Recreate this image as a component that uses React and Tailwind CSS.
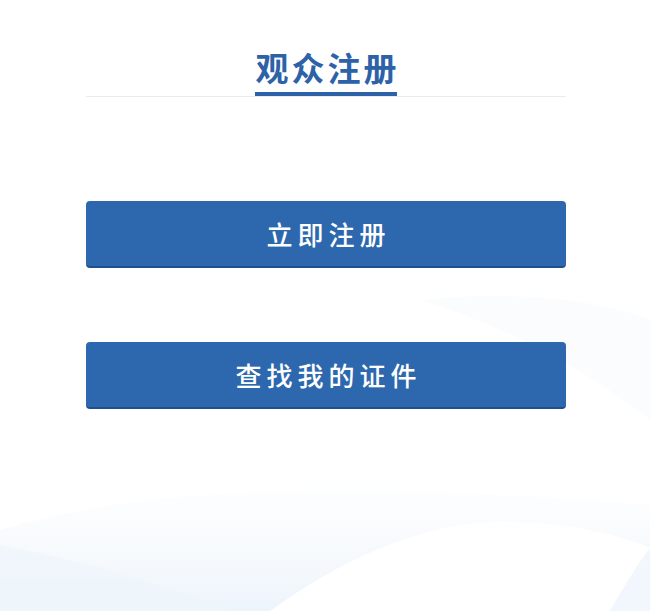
export default function App() {
  return (
    <div
      className="relative w-[650px] h-[611px] overflow-hidden bg-white"
      style={{ fontFamily: '"Noto Sans CJK SC", "Noto Sans", sans-serif' }}
    >
      <svg
        className="absolute inset-0 pointer-events-none"
        width="650"
        height="611"
        viewBox="0 0 650 611"
      >
        <defs>
          <linearGradient id="g2" x1="0" y1="0" x2="0" y2="1">
            <stop offset="0" stopColor="#f5f9fc" stopOpacity="0.2" />
            <stop offset="1" stopColor="#edf4fb" stopOpacity="1" />
          </linearGradient>
        </defs>
        <path d="M0 530 C 150 485, 350 480, 650 505 L650 611 L0 611 Z" fill="url(#g2)" />
        <path d="M0 545 C 80 560, 180 590, 230 611 L0 611 Z" fill="#eef5fb" opacity="0.7" />
        <path d="M270 611 C 340 560, 420 525, 490 522 C 560 520, 620 535, 650 548 L650 611 Z" fill="#ffffff" />
        <path d="M610 611 C 625 585, 640 560, 650 548 L650 611 Z" fill="#f1f7fc" />
        <path d="M420 300 C 520 290, 600 300, 650 320 L650 420 C 600 380, 520 330, 420 300 Z" fill="#f8fafd" opacity="0.5" />
      </svg>

      <div className="relative flex flex-col items-center pt-[45px] pl-[2px]">
        <div className="w-[480px] flex flex-col items-center border-b border-[#e9ecef]">
          <div className="flex flex-col items-center">
            <h1 className="text-[33px] leading-[44px] font-bold text-[#2d62a8] tracking-[3px] pl-[3px]">
              观众注册
            </h1>
            <div className="h-[4px] w-[142px] bg-[#2d62a8] mt-[3px]" />
          </div>
        </div>

        <div className="w-[480px] flex flex-col gap-[74px] mt-[104px]">
          <button className="h-[67px] w-full rounded-[4px] bg-[#2d68ae] border-b-2 border-[#1f4f8c] text-white text-[26px] font-medium tracking-[5px] pl-[5px] flex items-center justify-center">
            立即注册
          </button>
          <button className="h-[67px] w-full rounded-[4px] bg-[#2d68ae] border-b-2 border-[#1f4f8c] text-white text-[26px] font-medium tracking-[5px] pl-[5px] flex items-center justify-center">
            查找我的证件
          </button>
        </div>
      </div>
    </div>
  );
}
